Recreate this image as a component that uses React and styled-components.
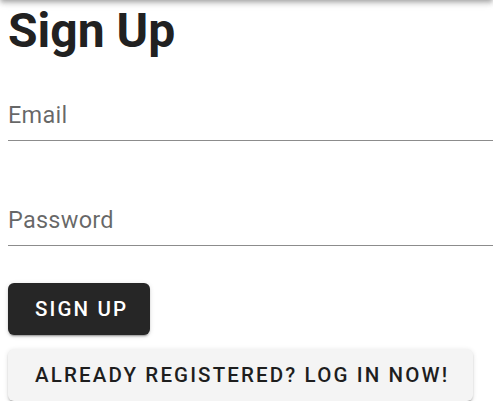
import React from "react";
import styled, { createGlobalStyle } from "styled-components";

const Global = createGlobalStyle`
  html, body { margin: 0; padding: 0; background: #fff; }
  body { font-family: Roboto, "Liberation Sans", Arial, sans-serif; overflow: hidden; }
  * { box-sizing: border-box; }
`;

const AppBar = styled.header`
  position: fixed;
  top: -64px;
  left: 0;
  right: 0;
  height: 64px;
  background: #fff;
  box-shadow: 0px 2px 4px -1px rgba(0,0,0,0.2), 0px 4px 5px 0px rgba(0,0,0,0.14), 0px 1px 10px 0px rgba(0,0,0,0.12);
`;

const Page = styled.main`
  padding: 3px 0 0 8px;
  display: flex;
  flex-direction: column;
`;

const Title = styled.h1`
  margin: 0;
  font-size: 48px;
  line-height: 56px;
  font-weight: 700;
  color: #212121;
`;

const Form = styled.form`
  display: flex;
  flex-direction: column;
  align-items: flex-start;
  margin-top: 41px;
`;

const Input = styled.input`
  display: block;
  width: 100%;
  margin: 0 0 ${p => p.$gap || 0}px;
  padding: 0 0 10px;
  height: 41px;
  line-height: 30px;
  font-family: inherit;
  font-size: 23.5px;
  letter-spacing: 0.25px;
  color: rgba(0,0,0,0.87);
  border: none;
  border-bottom: 1px solid rgba(0,0,0,0.45);
  outline: none;
  background: transparent;
  &::placeholder { color: rgba(0,0,0,0.6); opacity: 1; }
`;

const Button = styled.button`
  display: inline-flex;
  align-items: center;
  justify-content: center;
  height: 52px;
  padding: 0 ${p => p.$padR}px 0 27px;
  margin-top: ${p => p.$top}px;
  border: none;
  border-radius: 6px;
  font-family: inherit;
  font-size: 20.5px;
  font-weight: 500;
  letter-spacing: 2.13px;
  text-transform: uppercase;
  cursor: pointer;
  background: ${p => (p.$dark ? "#262626" : "#f4f4f4")};
  color: ${p => (p.$dark ? "#ffffff" : "#1e1e1e")};
  box-shadow: 0px 3px 1px -2px rgba(0,0,0,0.2), 0px 2px 2px 0px rgba(0,0,0,0.14), 0px 1px 5px 0px rgba(0,0,0,0.12);
`;

export default function App() {
  return (
    <>
      <Global />
      <AppBar />
      <Page>
        <Title>Sign Up</Title>
        <Form onSubmit={e => e.preventDefault()}>
          <Input type="email" placeholder="Email" $gap={64} />
          <Input type="password" placeholder="Password" />
          <Button type="submit" $dark $padR={22} $top={37}>Sign Up</Button>
          <Button type="button" $padR={24} $top={14}>Already registered? Log in now!</Button>
        </Form>
      </Page>
    </>
  );
}
